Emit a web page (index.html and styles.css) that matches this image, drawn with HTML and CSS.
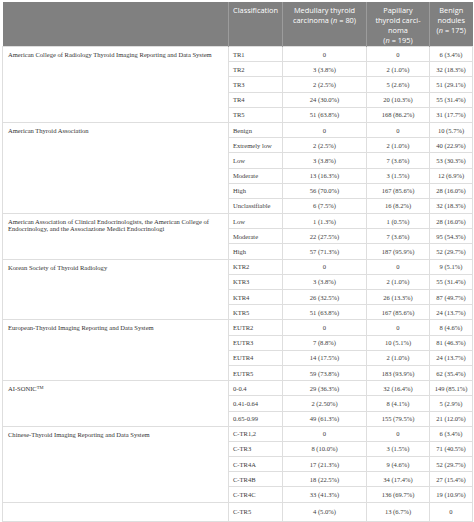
FILE: index.html
```html
<!DOCTYPE html>
<html>
<head>
<meta charset="utf-8">
<link rel="stylesheet" href="styles.css">
</head>
<body>
<table class="data">
  <colgroup>
    <col class="c-label">
    <col class="c-class">
    <col class="c-mtc">
    <col class="c-ptc">
    <col class="c-ben">
  </colgroup>
  <thead>
    <tr class="head">
      <th class="h-blank"></th>
      <th class="h-cls">Classification</th>
      <th>Medullary thyroid<br>carcinoma (<i>n</i> = 80)</th>
      <th>Papillary<br>thyroid carci-<br>noma<br>(<i>n</i> = 195)</th>
      <th>Benign<br>nodules<br>(<i>n</i> = 175)</th>
    </tr>
  </thead>
  <tbody>
    <tr class="grp"><td class="label" rowspan="5">American College of Radiology Thyroid Imaging Reporting and Data System</td><td class="cls">TR1</td><td>0</td><td>0</td><td>6 (3.4%)</td></tr>
    <tr><td class="cls">TR2</td><td>3 (3.8%)</td><td>2 (1.0%)</td><td>32 (18.3%)</td></tr>
    <tr><td class="cls">TR3</td><td>2 (2.5%)</td><td>5 (2.6%)</td><td>51 (29.1%)</td></tr>
    <tr><td class="cls">TR4</td><td>24 (30.0%)</td><td>20 (10.3%)</td><td>55 (31.4%)</td></tr>
    <tr><td class="cls">TR5</td><td>51 (63.8%)</td><td>168 (86.2%)</td><td>31 (17.7%)</td></tr>

    <tr class="grp"><td class="label" rowspan="6">American Thyroid Association</td><td class="cls">Benign</td><td>0</td><td>0</td><td>10 (5.7%)</td></tr>
    <tr><td class="cls">Extremely low</td><td>2 (2.5%)</td><td>2 (1.0%)</td><td>40 (22.9%)</td></tr>
    <tr><td class="cls">Low</td><td>3 (3.8%)</td><td>7 (3.6%)</td><td>53 (30.3%)</td></tr>
    <tr><td class="cls">Moderate</td><td>13 (16.3%)</td><td>3 (1.5%)</td><td>12 (6.9%)</td></tr>
    <tr><td class="cls">High</td><td>56 (70.0%)</td><td>167 (85.6%)</td><td>28 (16.0%)</td></tr>
    <tr><td class="cls">Unclassifiable</td><td>6 (7.5%)</td><td>16 (8.2%)</td><td>32 (18.3%)</td></tr>

    <tr class="grp"><td class="label" rowspan="3">American Association of Clinical Endocrinologists, the American College of Endocrinology, and the Associazione Medici Endocrinologi</td><td class="cls">Low</td><td>1 (1.3%)</td><td>1 (0.5%)</td><td>28 (16.0%)</td></tr>
    <tr><td class="cls">Moderate</td><td>22 (27.5%)</td><td>7 (3.6%)</td><td>95 (54.3%)</td></tr>
    <tr><td class="cls">High</td><td>57 (71.3%)</td><td>187 (95.9%)</td><td>52 (29.7%)</td></tr>

    <tr class="grp"><td class="label" rowspan="4">Korean Society of Thyroid Radiology</td><td class="cls">KTR2</td><td>0</td><td>0</td><td>9 (5.1%)</td></tr>
    <tr><td class="cls">KTR3</td><td>3 (3.8%)</td><td>2 (1.0%)</td><td>55 (31.4%)</td></tr>
    <tr><td class="cls">KTR4</td><td>26 (32.5%)</td><td>26 (13.3%)</td><td>87 (49.7%)</td></tr>
    <tr><td class="cls">KTR5</td><td>51 (63.8%)</td><td>167 (85.6%)</td><td>24 (13.7%)</td></tr>

    <tr class="grp"><td class="label" rowspan="4">European-Thyroid Imaging Reporting and Data System</td><td class="cls">EUTR2</td><td>0</td><td>0</td><td>8 (4.6%)</td></tr>
    <tr><td class="cls">EUTR3</td><td>7 (8.8%)</td><td>10 (5.1%)</td><td>81 (46.3%)</td></tr>
    <tr><td class="cls">EUTR4</td><td>14 (17.5%)</td><td>2 (1.0%)</td><td>24 (13.7%)</td></tr>
    <tr><td class="cls">EUTR5</td><td>59 (73.8%)</td><td>183 (93.9%)</td><td>62 (35.4%)</td></tr>

    <tr class="grp"><td class="label" rowspan="3">AI-SONIC<sup>TM</sup></td><td class="cls">0-0.4</td><td>29 (36.3%)</td><td>32 (16.4%)</td><td>149 (85.1%)</td></tr>
    <tr><td class="cls">0.41-0.64</td><td>2 (2.50%)</td><td>8 (4.1%)</td><td>5 (2.9%)</td></tr>
    <tr><td class="cls">0.65-0.99</td><td>49 (61.3%)</td><td>155 (79.5%)</td><td>21 (12.0%)</td></tr>

    <tr class="grp"><td class="label" rowspan="5">Chinese-Thyroid Imaging Reporting and Data System</td><td class="cls">C-TR1,2</td><td>0</td><td>0</td><td>6 (3.4%)</td></tr>
    <tr><td class="cls">C-TR3</td><td>8 (10.0%)</td><td>3 (1.5%)</td><td>71 (40.5%)</td></tr>
    <tr><td class="cls">C-TR4A</td><td>17 (21.3%)</td><td>9 (4.6%)</td><td>52 (29.7%)</td></tr>
    <tr><td class="cls">C-TR4B</td><td>18 (22.5%)</td><td>34 (17.4%)</td><td>27 (15.4%)</td></tr>
    <tr><td class="cls">C-TR4C</td><td>33 (41.3%)</td><td>136 (69.7%)</td><td>19 (10.9%)</td></tr>

    <tr class="grp"><td class="label"></td><td class="cls">C-TR5</td><td>4 (5.0%)</td><td>13 (6.7%)</td><td>0</td></tr>
  </tbody>
</table>
</body>
</html>
```

FILE: styles.css
```css
html, body {
  margin: 0;
  background: #ffffff;
}
body {
  padding: 2px;
}
.data {
  border-collapse: collapse;
  table-layout: fixed;
  width: 470px;
  font-family: "Liberation Serif", "Times New Roman", serif;
  font-size: 6.55px;
  color: #3c3c3c;
}
.c-label { width: 226px; }
.c-class { width: 54px; }
.c-mtc { width: 84px; }
.c-ptc { width: 63px; }
.c-ben { width: 43px; }

.head {
  height: 44px;
}
.head th {
  background: #808080;
  color: #ffffff;
  font-family: "Open Sans", "Liberation Sans", sans-serif;
  font-weight: 400;
  font-size: 7.4px;
  line-height: 10px;
  vertical-align: top;
  text-align: center;
  padding: 3px 2px 1px;
  border-left: 1px solid #9c9c9c;
}
.head th.h-blank {
  border-left: none;
}
.head th.h-cls {
  text-align: left;
  padding-left: 4px;
}
.head i {
  font-style: italic;
}

.data td {
  height: 14.2px;
  padding: 0 3px;
  line-height: 7px;
  text-align: center;
  vertical-align: middle;
  border: 1px solid #dedede;
  white-space: nowrap;
}
.data td.cls {
  text-align: left;
  padding-left: 4px;
}
.data td.label {
  text-align: left;
  vertical-align: top;
  white-space: normal;
  padding: 4px 16px 0 5px;
  color: #333333;
}
.data sup {
  font-size: 4.5px;
  line-height: 0;
  vertical-align: 2.5px;
}
```
